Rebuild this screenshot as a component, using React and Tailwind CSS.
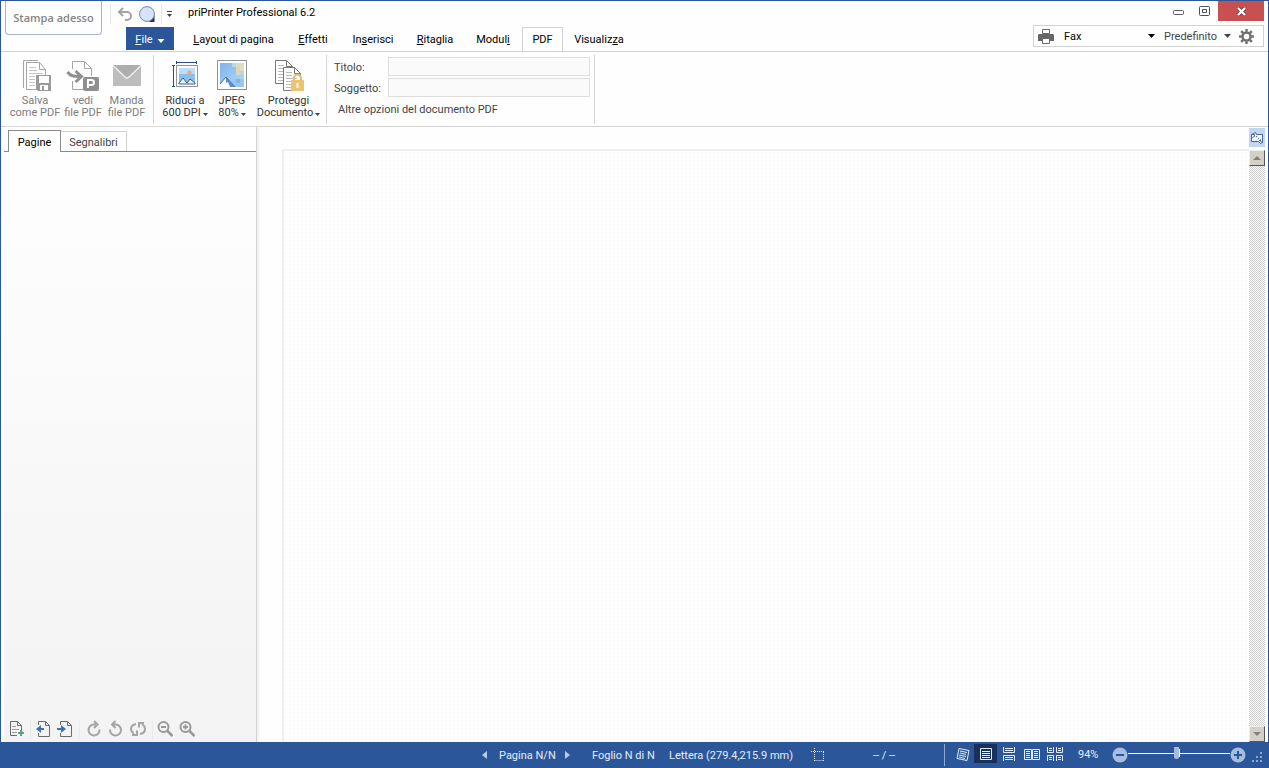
import { useState } from 'react';

function Caret({ className }) {
  return (
    <svg width="7" height="4" viewBox="0 0 7 4" className={className} fill="currentColor">
      <path d="M0 0h7L3.5 4z" />
    </svg>
  );
}

// Foglio con angolo piegato e righe di testo
function Sheet({ x, y, stroke }) {
  return (
    <g transform={`translate(${x} ${y})`}>
      <path d="M.5.5h11l6 6v17H.5z" fill="#fff" stroke={stroke} />
      <path d="M11.5.5v6h6" fill="none" stroke={stroke} />
      <path d="M3 5.5h6M3 8.5h6M3 11.5h11M3 14.5h11M3 17.5h11M3 20.5h8" stroke={stroke} opacity=".5" />
    </g>
  );
}

function SaveIcon() {
  return (
    <svg width="32" height="32" viewBox="0 0 32 32">
      <path d="M4.500 28V.5H19" fill="none" stroke="#a5a5a5" />
      <path d="M7.500 2.500h13l6 7v20h-19z" fill="#fff" stroke="#a5a5a5" />
      <path d="M20.500 2.500v7h6" fill="none" stroke="#a5a5a5" />
      <path d="M10 7.500h7M10 10.500h8M10 13.500h14M10 16.500h6M10 19.500h6M10 22.500h6M10 25.500h6" stroke="#c4c4c4" />
      <path d="M17 15h15l1 1v15H19l-2-2z" fill="#9a9a9a" />
      <path d="M20 16h10v7H20z" fill="#fff" />
      <path d="M21 25h8v5h-8z" fill="#fff" />
      <path d="M23 26h2v4h-2z" fill="#9a9a9a" />
    </svg>
  );
}

function OpenPdfIcon() {
  return (
    <svg width="34" height="32" viewBox="0 0 34 32">
      <path d="M6.500 9V1.500h12l7 7V16M18.500 1.500v7h7M6.500 21v8.500H17" fill="none" stroke="#a5a5a5" />
      <path d="M1.500 12c3 4 6 4.500 12 4.500M9.500 11l6 5.500-6 5.500" fill="none" stroke="#909090" strokeWidth="3" />
      <rect x="17" y="17" width="16" height="14" rx="2" fill="#8f8f8f" />
      <path d="M22 28v-8h3.500a2.500 2.500 0 0 1 0 5H22" fill="none" stroke="#fff" strokeWidth="2" />
    </svg>
  );
}

function MailIcon() {
  return (
    <svg width="32" height="32" viewBox="0 0 32 32">
      <path d="M2 5h28v21H2z" fill="#bdbdbd" />
      <path d="M2 5h28L18 17q-2 2-4 0z" fill="#aeaeae" />
      <path d="M2 5.500l12 11.500q2 2 4 0L30 5.500" fill="none" stroke="#f0f0f0" strokeWidth="1.300" />
    </svg>
  );
}

function ResizeIcon() {
  return (
    <svg width="32" height="32" viewBox="0 0 32 32">
      <path d="M7 2.500h20M7.500 1v3M27.500 1v3M4.500 6v20M3 5.500h3M3 26.500h3" fill="none" stroke="#2d4a80" />
      <rect x="7.500" y="5.500" width="21" height="21" fill="#fff" stroke="#8d949c" />
      <path d="M10 8h16v16H10z" fill="#8fbdec" />
      <path d="M10 8h16v6H10z" fill="#bddcf7" />
      <circle cx="20.500" cy="12.500" r="2" fill="#f5a27a" />
      <path d="M10 23l4-5 4 5 3-4 5 4v1H10z" fill="#e7f2fb" stroke="#315f9f" />
    </svg>
  );
}

function JpegIcon() {
  return (
    <svg width="32" height="32" viewBox="0 0 32 32">
      <defs>
        <linearGradient id="cielo" x1="0" y1="0" x2="1" y2="1">
          <stop offset="0" stopColor="#7fb2ea" />
          <stop offset="1" stopColor="#b5dcf8" />
        </linearGradient>
      </defs>
      <rect x="1.500" y=".5" width="29" height="29" fill="#fff" stroke="#8d949c" />
      <path d="M4 3h24v24H4z" fill="url(#cielo)" />
      <path d="M16 3h4v4h-4zM24 11h4v4h-4z" fill="#b9d6e6" />
      <path d="M20 3h4v4h-4zM24 3h4v4h-4z" fill="#dcdcc6" />
      <path d="M20 7h4v4h-4z" fill="#f3cfa5" />
      <path d="M24 7h4v4h-4z" fill="#e6dcc0" />
      <path d="M20 11h4v4h-4z" fill="#c9dbd9" />
      <path d="M16 19h12v8H16z" fill="#9cc5f0" />
      <path d="M20 19h4v4h-4z" fill="#86b2e6" />
      <path d="M4 24l6-7 9 10H4z" fill="#fff" />
      <path d="M10 17l9 10h-5l-2-5-2 1z" fill="#5d8fd0" />
      <path d="M4 24l6-7 9 10" fill="none" stroke="#46699c" />
    </svg>
  );
}

function ProtectIcon() {
  return (
    <svg width="34" height="32" viewBox="0 0 34 32">
      <Sheet x={3} y={0} stroke="#777" />
      <Sheet x={11} y={7} stroke="#777" />
      <path d="M22 21v-3a3.500 3.500 0 0 1 7 0v3" fill="none" stroke="#dfbb72" strokeWidth="2" />
      <rect x="19" y="20" width="13" height="11" rx="1" fill="#edc270" />
      <path d="M24.500 23h2v5h-2z" fill="#fff" />
    </svg>
  );
}

function RibbonButton({ icon, lines, menu, muted, className }) {
  return (
    <button
      className={`flex shrink-0 flex-col items-center whitespace-nowrap ${muted ? 'text-[#7d7d7d]' : 'text-[#333]'} ${className}`}
    >
      {icon}
      <span className="mt-[3px] leading-3">{lines[0]}</span>
      <span className="flex items-center leading-3">
        {lines[1]}
        {menu && (
          <svg width="5" height="3" viewBox="0 0 5 3" className="mt-0.5 ml-0.5" fill="#444">
            <path d="M0 0h5L2.500 3z" />
          </svg>
        )}
      </span>
    </button>
  );
}

function Divider() {
  return <div className="w-px shrink-0 bg-[#d4d4d4]" />;
}

const tabs = [
  { id: 'layout', w: 'w-[105px]', label: <><u>L</u>ayout di pagina</> },
  { id: 'effetti', w: 'w-[54px]', label: <><u>E</u>ffetti</> },
  { id: 'inserisci', w: 'w-[66px]', label: <>In<u>s</u>erisci</> },
  { id: 'ritaglia', w: 'w-[58px]', label: <><u>R</u>itaglia</> },
  { id: 'moduli', w: 'w-[58px]', label: <>Modul<u>i</u></> },
  { id: 'pdf', w: 'w-[41px]', label: 'PDF' },
  { id: 'visualizza', w: 'w-[72px]', label: <>Visualiz<u>z</u>a</> },
];

function Header() {
  const [tab, setTab] = useState('pdf');
  return (
    <header className="flex h-[51px] shrink-0 border-b border-[#d2d2d2] pl-1">
      <button className="h-[34px] w-[97px] shrink-0 rounded-b-sm border border-t-0 border-[#aab4c8] font-['Open_Sans',sans-serif] text-[11px] font-semibold text-[#858585]">
        Stampa adesso
      </button>
      <div className="flex min-w-0 flex-1 flex-col">
        <div className="flex h-[27px] items-center pl-2">
          <div className="h-5 w-px bg-[#e8e8e8]" />
          <button aria-label="Annulla" className="ml-1.5">
            <svg width="16" height="16" viewBox="0 0 16 16" fill="none" stroke="#a3a3a3" strokeWidth="2">
              <path d="M6 2L2 6l4 4M2.500 6H10a4 4 0 0 1 0 8H8" />
            </svg>
          </button>
          <button aria-label="Anteprima" className="ml-1.5">
            <svg width="16" height="18" viewBox="0 0 16 18">
              <path d="M10 17h5.500v-7z" fill="#333" />
              <circle cx="8" cy="9" r="7.400" fill="#d5e3fc" stroke="#7784a0" />
            </svg>
          </button>
          <div className="ml-1.5 h-5 w-px bg-[#e8e8e8]" />
          <button aria-label="Personalizza" className="ml-1">
            <svg width="7" height="6" viewBox="0 0 7 6" fill="#444">
              <path d="M1 0h5v1H1zM1 3h5L3.500 6z" />
            </svg>
          </button>
          <h1 className="mb-0.5 ml-[15px] text-black">priPrinter Professional 6.2</h1>
        </div>
        <div className="flex h-6 pl-6">
          <button className="flex h-[23px] w-12 items-center justify-center gap-1 bg-[#2b579a] pt-0.5 text-white">
            <span><u>F</u>ile</span>
            <Caret className="mt-0.5 w-2" />
          </button>
          <nav className="ml-[7px] flex h-6">
            {tabs.map((t) => (
              <button
                key={t.id}
                onClick={() => setTab(t.id)}
                className={`${t.w} shrink-0 whitespace-nowrap text-black ${
                  tab === t.id ? 'border border-b-0 border-[#d2d2d2] bg-white' : 'pt-0.5'
                }`}
              >
                {t.label}
              </button>
            ))}
          </nav>
        </div>
      </div>
      <div className="flex w-[235px] shrink-0 flex-col items-end">
        <div className="flex h-5 items-center">
          <button aria-label="Riduci a icona" className="mt-1">
            <svg width="12" height="6" viewBox="0 0 12 6">
              <rect x=".5" y=".5" width="10" height="4" rx="1" fill="#fff" stroke="#5b5b66" />
            </svg>
          </button>
          <button aria-label="Ingrandisci" className="ml-3.5">
            <svg width="12" height="10" viewBox="0 0 12 10" fill="none" stroke="#4e4e5c">
              <rect x=".5" y=".5" width="10" height="9" rx="1" />
              <path d="M3.500 3.500h4v3h-4z" />
            </svg>
          </button>
          <button aria-label="Chiudi" className="mr-1 ml-[7px] flex h-5 w-[46px] items-center justify-center bg-[#c75050]">
            <svg width="11" height="9" viewBox="0 0 11 9">
              <path d="M2 1l7 7M9 1L2 8" stroke="#7d3b43" strokeWidth="4" />
              <path d="M2 1l7 7M9 1L2 8" stroke="#fff" strokeWidth="2.300" />
            </svg>
          </button>
        </div>
        <div className="mt-1 mr-1 flex h-[22px] w-[231px] items-center border border-[#d2d2d2]">
          <svg width="16" height="15" viewBox="0 0 16 15" className="ml-1">
            <path d="M4.500.5h7v4h-7z" fill="#fff" stroke="#666" />
            <path d="M1 5h14l1 1v6H0V6z" fill="#666" />
            <path d="M4.500 9.500h7v5h-7z" fill="#fff" stroke="#666" />
          </svg>
          <div className="relative ml-2.5 w-[91px] pt-px">
            <select aria-label="Stampante" className="w-full appearance-none text-black outline-none">
              <option>Fax</option>
            </select>
            <Caret className="pointer-events-none absolute top-1.5 right-0 text-black" />
          </div>
          <div className="relative ml-[9px] w-[67px] pt-px">
            <select aria-label="Profilo" className="w-full appearance-none text-[#444] outline-none">
              <option>Predefinito</option>
            </select>
            <Caret className="pointer-events-none absolute top-1.5 right-0 text-[#444]" />
          </div>
          <button aria-label="Impostazioni" className="ml-2">
            <svg width="15" height="15" viewBox="0 0 16 16" fill="none" stroke="#707070">
              <circle cx="8" cy="8" r="4.300" strokeWidth="2.600" />
              <path d="M8 0v3M8 13v3M0 8h3M13 8h3M2.300 2.300l2.200 2.200M11.500 11.500l2.200 2.200M2.300 13.700l2.200-2.200M11.500 4.500l2.200-2.200" strokeWidth="2.600" />
            </svg>
          </button>
        </div>
      </div>
    </header>
  );
}

function Ribbon() {
  return (
    <section className="flex h-[75px] shrink-0 border-b border-[#d2d2d2] pt-[3px] pb-0.5">
      <div className="flex w-[152px] shrink-0 pt-[5px] pl-2">
        <RibbonButton muted className="w-[52px]" icon={<SaveIcon />} lines={['Salva', 'come PDF']} />
        <RibbonButton muted className="w-[44px]" icon={<OpenPdfIcon />} lines={['vedi', 'file PDF']} />
        <RibbonButton muted className="w-[43px]" icon={<MailIcon />} lines={['Manda', 'file PDF']} />
      </div>
      <Divider />
      <div className="flex w-[172px] shrink-0 pt-[5px] pl-1.5">
        <RibbonButton menu className="w-[50px]" icon={<ResizeIcon />} lines={['Riduci a', '600 DPI']} />
        <RibbonButton menu className="w-[44px]" icon={<JpegIcon />} lines={['JPEG', '80%']} />
        <RibbonButton menu className="w-[69px]" icon={<ProtectIcon />} lines={['Proteggi', 'Documento']} />
      </div>
      <Divider />
      <div className="flex w-[267px] shrink-0 flex-col gap-0.5 pt-0.5 pl-[7px] text-[#444]">
        <div className="flex h-[19px] items-center">
          <label htmlFor="titolo" className="w-[54px] pt-0.5">Titolo:</label>
          <input id="titolo" className="h-[19px] w-[202px] border border-[#dedede] bg-[#fafafa] px-1 outline-none" />
        </div>
        <div className="flex h-[19px] items-center">
          <label htmlFor="soggetto" className="w-[54px] pt-0.5">Soggetto:</label>
          <input id="soggetto" className="h-[19px] w-[202px] border border-[#dedede] bg-[#fafafa] px-1 outline-none" />
        </div>
        <button className="h-[19px] self-start pt-0.5 pl-1">Altre opzioni del documento PDF</button>
      </div>
      <Divider />
    </section>
  );
}

function PageIcon({ children }) {
  return (
    <svg width="16" height="18" viewBox="0 0 16 18" fill="none">
      {children}
    </svg>
  );
}

function SideTools() {
  return (
    <div className="flex h-[27px] shrink-0 items-center pl-1">
      <button aria-label="Aggiungi pagina">
        <PageIcon>
          <path d="M13.500 10V5.500l-4-4h-7v14H9M9.500 1.500v4h4" stroke="#6b6b6b" />
          <path d="M4 6.500h4M4 9.500h7M4 12.500h5" stroke="#a0a0a0" />
          <path d="M13 10v6M10 13h6" stroke="#5f9f83" strokeWidth="2" />
        </PageIcon>
      </button>
      <div className="ml-1.5 h-5 w-px bg-[#ebebeb]" />
      <button aria-label="Pagina precedente" className="ml-1">
        <PageIcon>
          <path d="M3.500 5V1.500h7l4 4v11h-11V13M10.500 1.500v4h4" stroke="#6b6b6b" />
          <path d="M9 8H6V5L1 9l5 4v-3h3z" fill="#3f73ae" />
        </PageIcon>
      </button>
      <button aria-label="Pagina successiva" className="ml-1.5">
        <PageIcon>
          <path d="M3.500 5V1.500h7l4 4v11h-11V13M10.500 1.500v4h4" stroke="#6b6b6b" />
          <path d="M0 8h4V5l5 4-5 4v-3H0z" fill="#3f73ae" />
        </PageIcon>
      </button>
      <div className="ml-1.5 h-5 w-px bg-[#ebebeb]" />
      <button aria-label="Ruota a destra" className="ml-1.5">
        <PageIcon>
          <path d="M13.500 9.500A5.500 5.500 0 1 1 8 4.500h3.500M8 1l3.500 3.500L8 8" stroke="#a5a5a5" strokeWidth="2" />
        </PageIcon>
      </button>
      <button aria-label="Ruota a sinistra" className="ml-1.5">
        <PageIcon>
          <path d="M2 9.500a5.500 5.500 0 1 0 5.500-5H4M7.500 1L4 4.500 7.500 8" stroke="#a5a5a5" strokeWidth="2" />
        </PageIcon>
      </button>
      <button aria-label="Ruota tutte" className="ml-1.5">
        <PageIcon>
          <path d="M6 4C0 5-.5 11 4 14M2 15h5v-4.500M10 14c6-1 6.500-7 2-10M14 3H9v4.500" stroke="#a5a5a5" strokeWidth="2" />
        </PageIcon>
      </button>
      <div className="ml-1.5 h-5 w-px bg-[#ebebeb]" />
      <button aria-label="Riduci zoom" className="ml-1">
        <PageIcon>
          <circle cx="6.500" cy="7" r="5" stroke="#999" strokeWidth="2" />
          <path d="M4 7h5" stroke="#999" strokeWidth="2" />
          <path d="M10 10.500l5.500 5.500" stroke="#999" strokeWidth="2.500" />
        </PageIcon>
      </button>
      <button aria-label="Aumenta zoom" className="ml-1.5">
        <PageIcon>
          <circle cx="6.500" cy="7" r="5" stroke="#999" strokeWidth="2" />
          <path d="M4 7h5M6.500 4.500v5" stroke="#999" strokeWidth="2" />
          <path d="M10 10.500l5.500 5.500" stroke="#999" strokeWidth="2.500" />
        </PageIcon>
      </button>
    </div>
  );
}

function SidePanel() {
  return (
    <aside className="ml-[3px] flex w-[253px] shrink-0 flex-col border-r border-[#d2d2d2] bg-linear-to-b from-white to-[#f3f3f3] shadow-[2px_0_2px_#f0f0f0]">
      <div className="mt-[3px] flex h-[22px] shrink-0 items-end border-b border-[#8a8a8a] pl-1">
        <button className="-mb-px h-[22px] w-[53px] border border-b-0 border-[#8a8a8a] bg-white pt-0.5 text-black">
          Pagine
        </button>
        <button className="h-5 w-[66px] border border-b-0 border-l-0 border-[#d0d0d0] pt-0.5 text-[#444]">
          Segnalibri
        </button>
      </div>
      <div className="flex-1" />
      <SideTools />
    </aside>
  );
}

function ScrollButton({ label, d }) {
  return (
    <button
      aria-label={label}
      className="flex size-4 items-center justify-center border border-t-[#eee] border-r-[#555] border-b-[#555] border-l-[#eee] bg-[#d4d0c8]"
    >
      <svg width="8" height="4" viewBox="0 0 8 4" fill="#808080">
        <path d={d} />
      </svg>
    </button>
  );
}

function Workspace() {
  return (
    <main className="flex min-w-0 flex-1 pr-[3px]">
      <div className="mt-[22px] ml-[25px] flex-1 border-t-2 border-l-2 border-[#efefef] bg-[radial-gradient(#fafafa_1px,transparent_1px)] bg-[length:4px_4px]" />
      <div className="flex w-4 shrink-0 flex-col">
        <button aria-label="Adatta pagina" className="mt-px mb-[3px] flex h-[19px] items-center justify-center bg-[#c2d5f2]">
          <svg width="14" height="13" viewBox="0 0 14 13" fill="#eef4fd" stroke="#4a6796">
            <path d="M3.500 2.500l2-1 1 2h6v8l-2 1-2-2h-7v-7z" />
            <path d="M1.500 3.500h3M4.500 3.500v2l-2 1M6 5l1 1M8 7l1 1M12.500 11.500l-2-1v-2M8.500 10.500l2-2" fill="none" />
          </svg>
        </button>
        <ScrollButton label="Scorri su" d="M4 0l4 4H0z" />
        <div className="flex-1 bg-[repeating-conic-gradient(#cccccc_0_25%,#ffffff_0_50%)] bg-[length:2px_2px]" />
        <ScrollButton label="Scorri giù" d="M0 0h8L4 4z" />
      </div>
    </main>
  );
}

const views = [
  { id: 'Inclinata', d: 'M5 2.500l10 2-2 10-10-2zM6 5l7 1.500M6 7l6 1.500M5 9l7 1.500M5 11l6 1.500' },
  { id: 'Pagina singola', d: 'M3.500 2.500h11v11h-11zM5 5.500h8M5 7.500h8M5 9.500h8M5 11.500h8' },
  { id: 'Continua', d: 'M3.500 1v5.500h11V1M5 2.500h8M5 4.500h8M3.500 15V9.500h11V15M5 11.500h8M5 13.500h8' },
  { id: 'Due pagine', d: 'M1.500 3.500h7v10h-7zM9.500 3.500h7v10h-7zM3 5.500h4M3 7.500h4M3 9.500h4M3 11.500h4M11 5.500h4M11 7.500h4M11 9.500h4M11 11.500h4' },
  { id: 'Due pagine continue', d: 'M1.500 1v5.500h6V1M10.500 1v5.500h6V1M3 2.500h3M3 4.500h3M12 2.500h3M12 4.500h3M1.500 15V9.500h6V15M10.500 15V9.500h6V15M3 11.500h3M12 11.500h3M3 13.500h3M12 13.500h3' },
];

function StatusBar() {
  const [view, setView] = useState('Pagina singola');
  return (
    <footer className="flex h-[26px] shrink-0 items-center justify-end bg-[#2b579a] text-[#e6edf8]">
      <button aria-label="Indietro">
        <svg width="5" height="8" viewBox="0 0 5 8" fill="#b8cce9"><path d="M5 0v8L0 4z" /></svg>
      </button>
      <span className="ml-3 w-14 pt-0.5 whitespace-nowrap">Pagina N/N</span>
      <button aria-label="Avanti" className="ml-2.5">
        <svg width="5" height="8" viewBox="0 0 5 8" fill="#b8cce9"><path d="M0 0v8l5-4z" /></svg>
      </button>
      <span className="ml-[22px] w-[60px] pt-0.5 whitespace-nowrap">Foglio N di N</span>
      <span className="ml-[17px] w-[126px] pt-0.5 whitespace-nowrap">Lettera (279.4,215.9 mm)</span>
      <svg width="14" height="14" viewBox="0 0 14 14" className="ml-4" fill="none" stroke="#dce7f7" strokeDasharray="1 1">
        <path d="M3.500 0v8M0 3.500h13M12.500 4v9M3.500 12.500h9M3.500 8v5" />
      </svg>
      <span className="ml-12 w-[26px] pt-0.5 whitespace-nowrap">-- / --</span>
      <div className="ml-[45px] h-[22px] w-px bg-[#8ea9d0]" />
      <div className="ml-1.5 flex h-5 items-start self-start">
        {views.map((v) => (
          <button
            key={v.id}
            aria-label={v.id}
            onClick={() => setView(v.id)}
            className={`mt-0.5 flex h-[19px] w-[23px] items-center justify-center ${view === v.id ? 'bg-[#17305c]' : ''}`}
          >
            <svg width="18" height="16" viewBox="0 0 18 16" fill="none" stroke="#e6edf8">
              <path d={v.d} />
            </svg>
          </button>
        ))}
      </div>
      <span className="ml-3 w-6">94%</span>
      <button aria-label="Riduci" className="ml-2.5">
        <svg width="16" height="16" viewBox="0 0 16 16">
          <circle cx="8" cy="8" r="7.500" fill="#a6bcdf" />
          <path d="M4 8h8" stroke="#2b579a" strokeWidth="2" />
        </svg>
      </button>
      <input
        type="range"
        aria-label="Zoom"
        min="0"
        max="200"
        defaultValue="94"
        className="mb-1 h-4 w-[102px] appearance-none bg-[linear-gradient(#fff,#fff),linear-gradient(#fff,#fff)] bg-[length:100%_1px,1px_8px] bg-center bg-no-repeat [&::-webkit-slider-thumb]:h-3 [&::-webkit-slider-thumb]:w-[5px] [&::-webkit-slider-thumb]:appearance-none [&::-webkit-slider-thumb]:rounded-b-sm [&::-webkit-slider-thumb]:bg-[#a6bcdf]"
      />
      <button aria-label="Aumenta">
        <svg width="16" height="16" viewBox="0 0 16 16">
          <circle cx="8" cy="8" r="7.500" fill="#a6bcdf" />
          <path d="M4 8h8M8 4v8" stroke="#2b579a" strokeWidth="2" />
        </svg>
      </button>
      <svg width="12" height="12" viewBox="0 0 12 12" className="mr-1 mb-1 ml-1.5 self-end" fill="#8ea9d0">
        <path d="M8 0h2v2H8zM4 4h2v2H4zM8 4h2v2H8zM0 8h2v2H0zM4 8h2v2H4zM8 8h2v2H8z" />
      </svg>
    </footer>
  );
}

export default function App() {
  return (
    <div className="flex h-screen flex-col overflow-hidden border border-b-0 border-[#2b579a] bg-[#fefefe] font-['Roboto','Open_Sans',sans-serif] text-[11px] leading-4">
      <Header />
      <Ribbon />
      <div className="flex min-h-0 flex-1">
        <SidePanel />
        <Workspace />
      </div>
      <StatusBar />
    </div>
  );
}
